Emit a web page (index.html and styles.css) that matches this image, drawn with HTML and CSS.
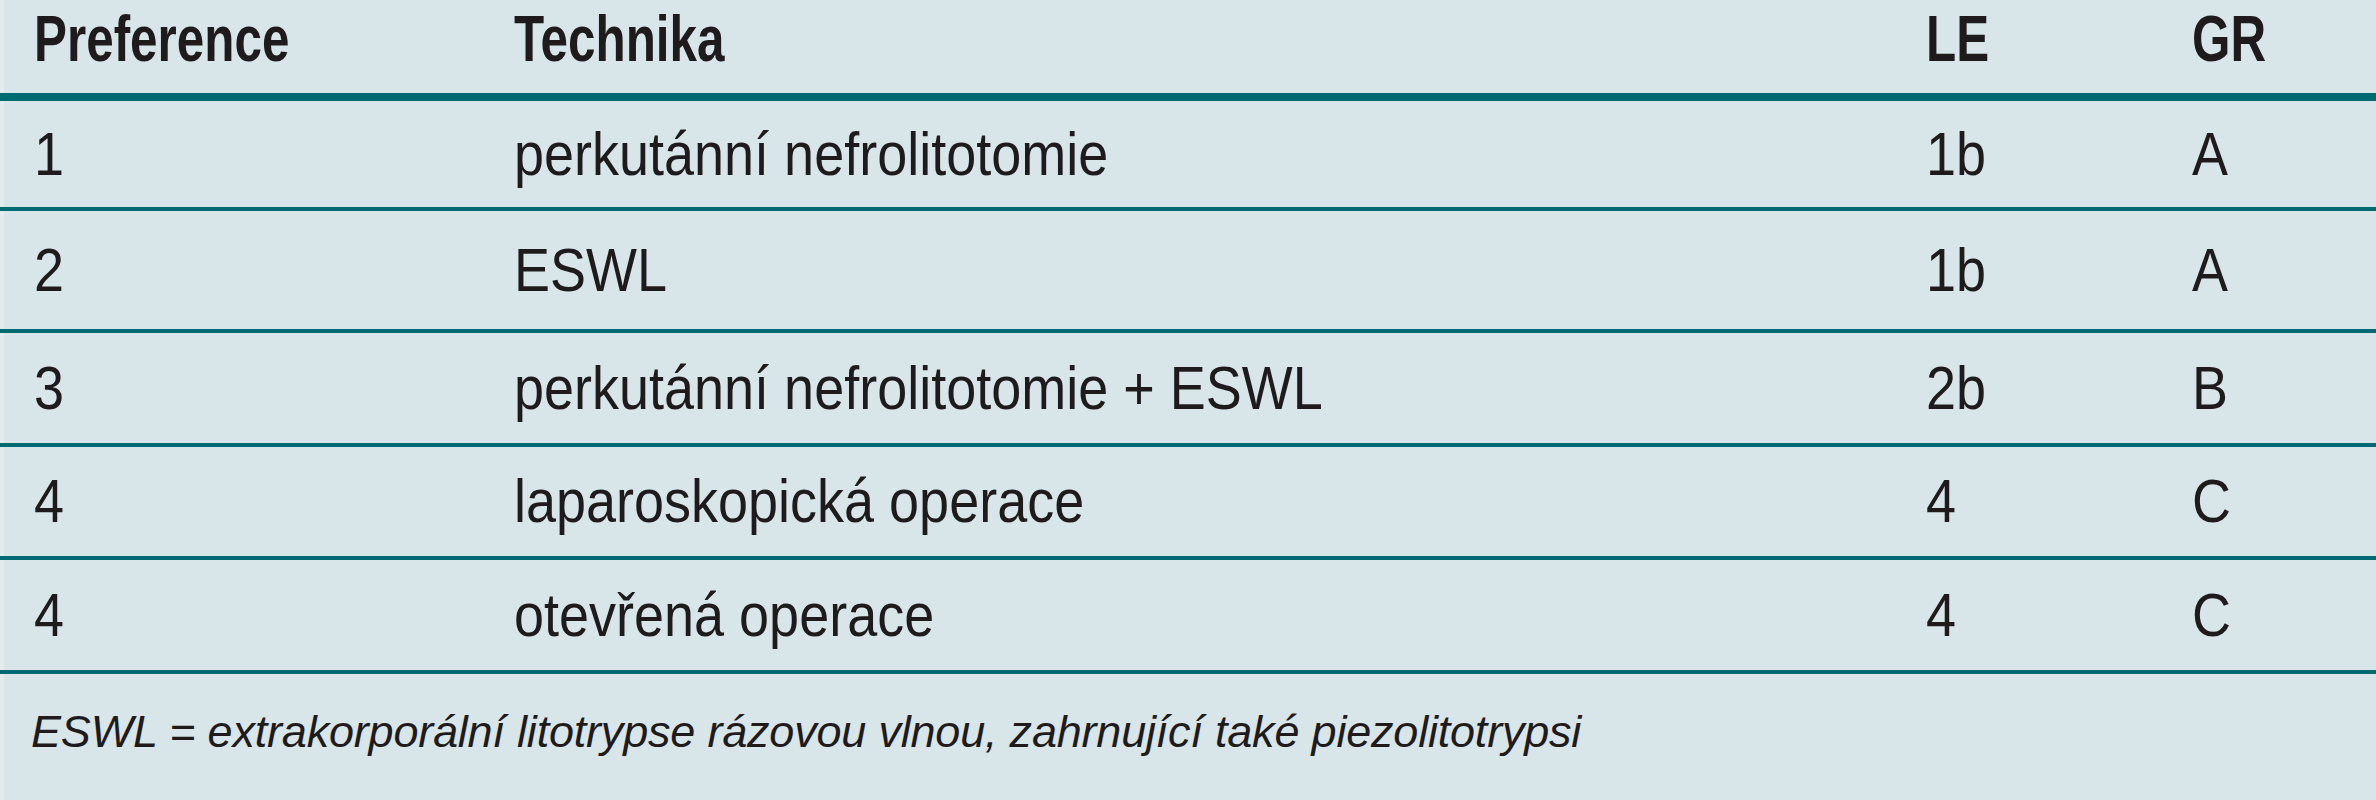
FILE: index.html
```html
<!DOCTYPE html>
<html lang="cs">
<head>
<meta charset="utf-8">
<title>Tabulka</title>
<link rel="stylesheet" href="styles.css">
</head>
<body>
<div class="table">
  <div class="row head">
    <div class="cell"><span class="t">Preference</span></div>
    <div class="cell"><span class="t">Technika</span></div>
    <div class="cell"><span class="t">LE</span></div>
    <div class="cell"><span class="t">GR</span></div>
  </div>
  <div class="row short">
    <div class="cell"><span class="t">1</span></div>
    <div class="cell"><span class="t">perkutánní nefrolitotomie</span></div>
    <div class="cell"><span class="t">1b</span></div>
    <div class="cell"><span class="t">A</span></div>
  </div>
  <div class="row tall">
    <div class="cell"><span class="t">2</span></div>
    <div class="cell"><span class="t">ESWL</span></div>
    <div class="cell"><span class="t">1b</span></div>
    <div class="cell"><span class="t">A</span></div>
  </div>
  <div class="row">
    <div class="cell"><span class="t">3</span></div>
    <div class="cell"><span class="t">perkutánní nefrolitotomie + ESWL</span></div>
    <div class="cell"><span class="t">2b</span></div>
    <div class="cell"><span class="t">B</span></div>
  </div>
  <div class="row mid">
    <div class="cell"><span class="t">4</span></div>
    <div class="cell"><span class="t">laparoskopická operace</span></div>
    <div class="cell"><span class="t">4</span></div>
    <div class="cell"><span class="t">C</span></div>
  </div>
  <div class="row">
    <div class="cell"><span class="t">4</span></div>
    <div class="cell"><span class="t">otevřená operace</span></div>
    <div class="cell"><span class="t">4</span></div>
    <div class="cell"><span class="t">C</span></div>
  </div>
  <div class="note">ESWL = extrakorporální litotrypse rázovou vlnou, zahrnující také piezolitotrypsi</div>
</div>
</body>
</html>
```

FILE: styles.css
```css
html, body {
  margin: 0;
  padding: 0;
}
body {
  width: 2376px;
  height: 800px;
  overflow: hidden;
  background: linear-gradient(to right, #e3ecec 0, #e3ecec 4px, #d8e6e9 4px);
  color: #1f1b1d;
  font-family: "Liberation Sans", Arial, sans-serif;
}
.table {
  display: flex;
  flex-direction: column;
}
.row {
  display: grid;
  grid-template-columns: 480px 1412px 266px 1fr;
  align-items: center;
  height: 110px;
  padding-left: 34px;
  border-bottom: 4px solid #006a72;
  font-size: 61px;
  line-height: 1;
}
.row.short {
  height: 106px;
}
.row.tall {
  height: 118px;
}
.row.mid {
  height: 109px;
}
.t {
  display: inline-block;
  white-space: nowrap;
  transform: scaleX(0.885);
  transform-origin: left center;
}
.row.head {
  height: 87px;
  align-items: start;
  padding-top: 6px;
  border-bottom-width: 8px;
  font-size: 65px;
  font-weight: bold;
}
.row.head .t {
  transform: scaleX(0.76);
}
.note {
  padding: 35px 0 0 31px;
  font-size: 45px;
  font-style: italic;
  line-height: 1;
  letter-spacing: -0.2px;
}
```
